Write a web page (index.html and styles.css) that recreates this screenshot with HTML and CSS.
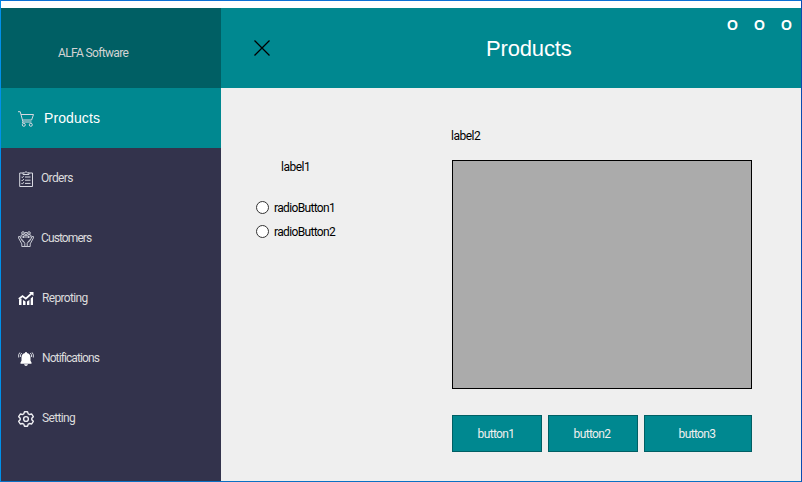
FILE: index.html
```
<!DOCTYPE html>
<html lang="en">
<head>
<meta charset="utf-8">
<title>ALFA Software</title>
<link rel="stylesheet" href="styles.css">
</head>
<body>
<div class="window">
  <aside class="sidebar">
    <div class="brand"><span>ALFA Software</span></div>
    <nav>
      <a class="item active">
        <svg class="icon" viewBox="0 0 16 16"><path d="M0 .7h2.2L5 11h8.5M3 3.5h12.5L13.6 9H4.500M5 11l-.8 1"/><circle cx="5.800" cy="13.800" r="1.500"/><circle cx="12.800" cy="13.800" r="1.500"/></svg>
        <span>Products</span></a>
      <a class="item orders">
        <svg class="icon" viewBox="0 0 16 16"><path d="M5 2H1.700v13.500h12.800V2H11M5 3.500V1.800h1.700Q8 -.7 9.300 1.800H11v1.700zM7 6h5.500M7 9.200h5.500M7 12.400h5.500M3.500 5.800l.8.900 1.500-1.900M3.500 9l.8.900 1.500-1.900M3.500 12.200l.8.900 1.500-1.900"/></svg>
        <span>Orders</span></a>
      <a class="item customers">
        <svg class="icon" viewBox="0 0 16 16"><circle cx="5" cy="2" r="1.300"/><circle cx="11" cy="2" r="1.300"/><circle cx="8" cy="2.700" r="1.300"/><path d="M3 6V4.300l2-.8 1.500 1 1.500-.4 1.500.4 1.500-1 2 .8V6M5.500 7V5M10.500 7V5M3.500 6h9M.6 5.500v1.500L3.800 12.900v2.600h3v-3L5 9.500 3.800 8.500M.6 5.500l1.500.2 1.500 3.300 2 2.200M15.400 5.500v1.500L12.200 12.900v2.600h-3v-3L11 9.500l1.200-1M15.400 5.500l-1.500.2-1.500 3.300-2 2.200M6.500 15.500h3"/></svg>
        <span>Customers</span></a>
      <a class="item reporting">
        <svg class="icon" viewBox="0 0 16 16"><path class="fill" d="M1 8.500l2.500-1V14H1zM5 9l2.500 1.500V14H5zM9 10.500L11.400 9v5H9zM12.700 7.500L15 5.500V14h-2.300zM11 1h4.500v4z"/><path class="thick" d="M.8 8L4.500 5l3.300 2.700L14 2"/></svg>
        <span>Reproting</span></a>
      <a class="item notifications">
        <svg class="icon" viewBox="0 0 16 16"><path class="fill" d="M7.200 1h1.600v1q3.700.6 3.700 4.500v3.200l1 1.800v1.200H2.500v-1.200l1-1.800V6.500Q3.500 2.600 7.200 2zM6 13.300h4Q9.500 15 8 15T6 13.300z"/><path d="M1.900 1.500Q0 3.500.7 6.500M3.700 2Q2 3.500 2.400 6M14.100 1.500q1.900 2 1.200 5M12.300 2q1.700 1.500 1.300 4"/></svg>
        <span>Notifications</span></a>
      <a class="item setting">
        <svg class="icon" viewBox="0 0 16 16"><path class="gear" d="M6.500.8h3l.7 2 1.300.7 2.200-.5 1.600 2.700L13.800 7.300v1.400l1.500 1.600-1.600 2.700-2.200-.5-1.300.7-.7 2h-3l-.7-2-1.300-.7-2.200.5L.7 10.300l1.500-1.600V7.300L.7 5.700 2.300 3l2.200.5 1.300-.7z"/><circle class="gear" cx="8" cy="8" r="2.400"/></svg>
        <span>Setting</span></a>
    </nav>
  </aside>
  <main>
    <header>
      <svg class="close" viewBox="0 0 16 16"><path d="M.5 .5l15 15M15.500 .5l-15 15"/></svg>
      <h1>Products</h1>
      <div class="controls"><span>O</span><span>O</span><span>O</span></div>
    </header>
    <section class="content">
      <form class="options">
        <p class="label">label1</p>
        <label><i class="radio"></i><span>radioButton1</span></label>
        <label><i class="radio"></i><span>radioButton2</span></label>
      </form>
      <div class="data">
        <p class="label">label2</p>
        <div class="grid"></div>
        <div class="buttons"><button>button1</button><button>button2</button><button>button3</button></div>
      </div>
    </section>
  </main>
</div>
</body>
</html>
```
FILE: styles.css
```
* { box-sizing: border-box; }
body { margin: 0; font: 12px/16px Roboto, "Liberation Sans", sans-serif; letter-spacing: -0.65px; color: #000; }
p, h1 { margin: 0; }
.window { width: 802px; height: 482px; display: flex; padding-top: 7px; background: #fff; border: 1px solid #0a4ab0; border-left-color: #0090ea; border-top-color: #0a70d4; border-bottom-color: #0a70c4; }
.sidebar { width: 220px; background: #33334c; color: #dcdcdc; }
.brand { height: 80px; padding: 37px 0 0 57px; background: #005f64; color: #d3d3d3; }
.item { display: flex; height: 60px; align-items: center; padding-left: 17px; }
.item span { margin-left: 7px; }
.active { background: #008890; color: #fff; font: 14px/16px "Liberation Sans", sans-serif; letter-spacing: 0.1px; }
.active span { margin-left: 10px; }
.customers, .notifications { letter-spacing: -0.9px; }
.reporting span, .notifications span, .setting span { margin-left: 8px; }
.icon { width: 16px; height: 16px; margin-top: 2px; fill: none; stroke: #d7d9e1; stroke-width: 1; overflow: visible; }
.customers .icon { stroke-width: .9; }
.icon .fill { fill: #fff; stroke: none; }
.icon .thick { stroke: #fff; stroke-width: 1.7; }
.icon .gear { stroke: #f0f0f4; stroke-width: 1.4; stroke-linejoin: round; }
main { flex: 1; background: #efefef; }
header { height: 80px; display: grid; grid-template-columns: 265px 1fr 74px; background: #008890; color: #fff; }
.close { width: 16px; height: 16px; margin: 32px 0 0 33px; fill: none; stroke: #000; stroke-width: 1.3; }
h1 { margin-top: 28px; font: 22px/26px "Liberation Sans", sans-serif; letter-spacing: -0.15px; }
.controls { display: flex; gap: 16px; padding-top: 9px; font: bold 14px/16px "Liberation Sans", sans-serif; letter-spacing: 0; }
.controls span { width: 11px; }
.content { display: flex; }
.options { width: 231px; padding: 71px 0 0 35px; }
.options .label { margin: 0 0 25px 25px; }
.options label { display: flex; height: 16px; margin-bottom: 8px; align-items: flex-start; }
.radio { width: 13px; height: 13px; margin: 1px 5px 0 0; border: 1px solid #333; border-radius: 50%; background: #fff; }
.label { letter-spacing: -0.5px; }
.data { width: 300px; padding-top: 40px; }
.data .label { margin-left: -1px; }
.grid { height: 229px; margin-top: 16px; background: #ababab; border: 1px solid #000; }
.buttons { display: grid; grid-template-columns: 90px 90px 108px; gap: 6px; margin-top: 26px; }
button { height: 37px; padding: 1px 2px 0 0; border: 1px solid #005f64; background: #008890; color: #efefef; font: inherit; letter-spacing: inherit; }
```
